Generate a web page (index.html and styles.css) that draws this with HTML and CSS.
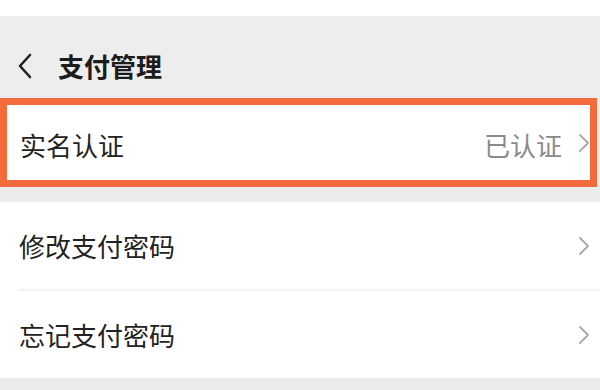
FILE: index.html
```html
<!DOCTYPE html>
<html lang="zh">
<head>
<meta charset="utf-8">
<link rel="stylesheet" href="styles.css">
</head>
<body>
<div class="status"></div>
<header class="header">
  <svg class="back" width="16" height="26" viewBox="0 0 16 26"><path d="M13 2 L3 13 L13 24" fill="none" stroke="#222" stroke-width="2.6" stroke-linecap="round" stroke-linejoin="round"/></svg>
  <h1 class="title">支付管理</h1>
</header>
<div class="highlight">
  <div class="row row-main">
    <span class="label">实名认证</span>
    <span class="value">已认证</span>
    <svg class="chev" width="12" height="20" viewBox="0 0 12 20"><path d="M2 2 L10 10 L2 18" fill="none" stroke="#a8a8a8" stroke-width="1.8" stroke-linecap="round" stroke-linejoin="round"/></svg>
  </div>
</div>
<div class="group">
  <div class="row row-list">
    <span class="label">修改支付密码</span>
    <svg class="chev" width="12" height="20" viewBox="0 0 12 20"><path d="M2 2 L10 10 L2 18" fill="none" stroke="#a8a8a8" stroke-width="1.8" stroke-linecap="round" stroke-linejoin="round"/></svg>
  </div>
  <div class="sep"></div>
  <div class="row row-list">
    <span class="label">忘记支付密码</span>
    <svg class="chev" width="12" height="20" viewBox="0 0 12 20"><path d="M2 2 L10 10 L2 18" fill="none" stroke="#a8a8a8" stroke-width="1.8" stroke-linecap="round" stroke-linejoin="round"/></svg>
  </div>
</div>
</body>
</html>
```
FILE: styles.css
```css
html, body {
  margin: 0;
  padding: 0;
}
body {
  width: 600px;
  height: 390px;
  overflow: hidden;
  background: #ececec;
  font-family: "Noto Sans CJK SC", "Noto Sans", sans-serif;
  color: #222;
}
.status {
  height: 16px;
  background: #ffffff;
}
.header {
  height: 64px;
  padding-top: 18px;
  display: flex;
  align-items: center;
  background: #ededed;
}
.back {
  margin-left: 17px;
}
.title {
  margin: 0 0 0 25px;
  font-size: 26px;
  font-weight: 700;
  line-height: 30px;
  color: #1c1c1c;
}
.highlight {
  width: 583px;
  height: 75px;
  border: 7px solid #f36a3b;
  background: #ffffff;
  display: flex;
}
.row {
  flex: 1;
  display: flex;
  align-items: center;
  padding-left: 13px;
  padding-right: 8px;
}
.row-main {
  padding-right: 0;
}
.label {
  flex: 1;
  font-size: 26px;
  line-height: 30px;
  color: #222;
  margin-top: 4px;
}
.value {
  font-size: 26px;
  line-height: 30px;
  color: #8a8a8a;
  margin-right: 16px;
  margin-top: 4px;
}
.group {
  margin-top: 15px;
  background: #ffffff;
}
.row-list {
  height: 87px;
  padding-left: 19px;
  padding-right: 10px;
}
.row-list .label {
  margin-top: 0;
}
.sep {
  height: 2px;
  margin-left: 18px;
  background: #f3f3f3;
}
```
